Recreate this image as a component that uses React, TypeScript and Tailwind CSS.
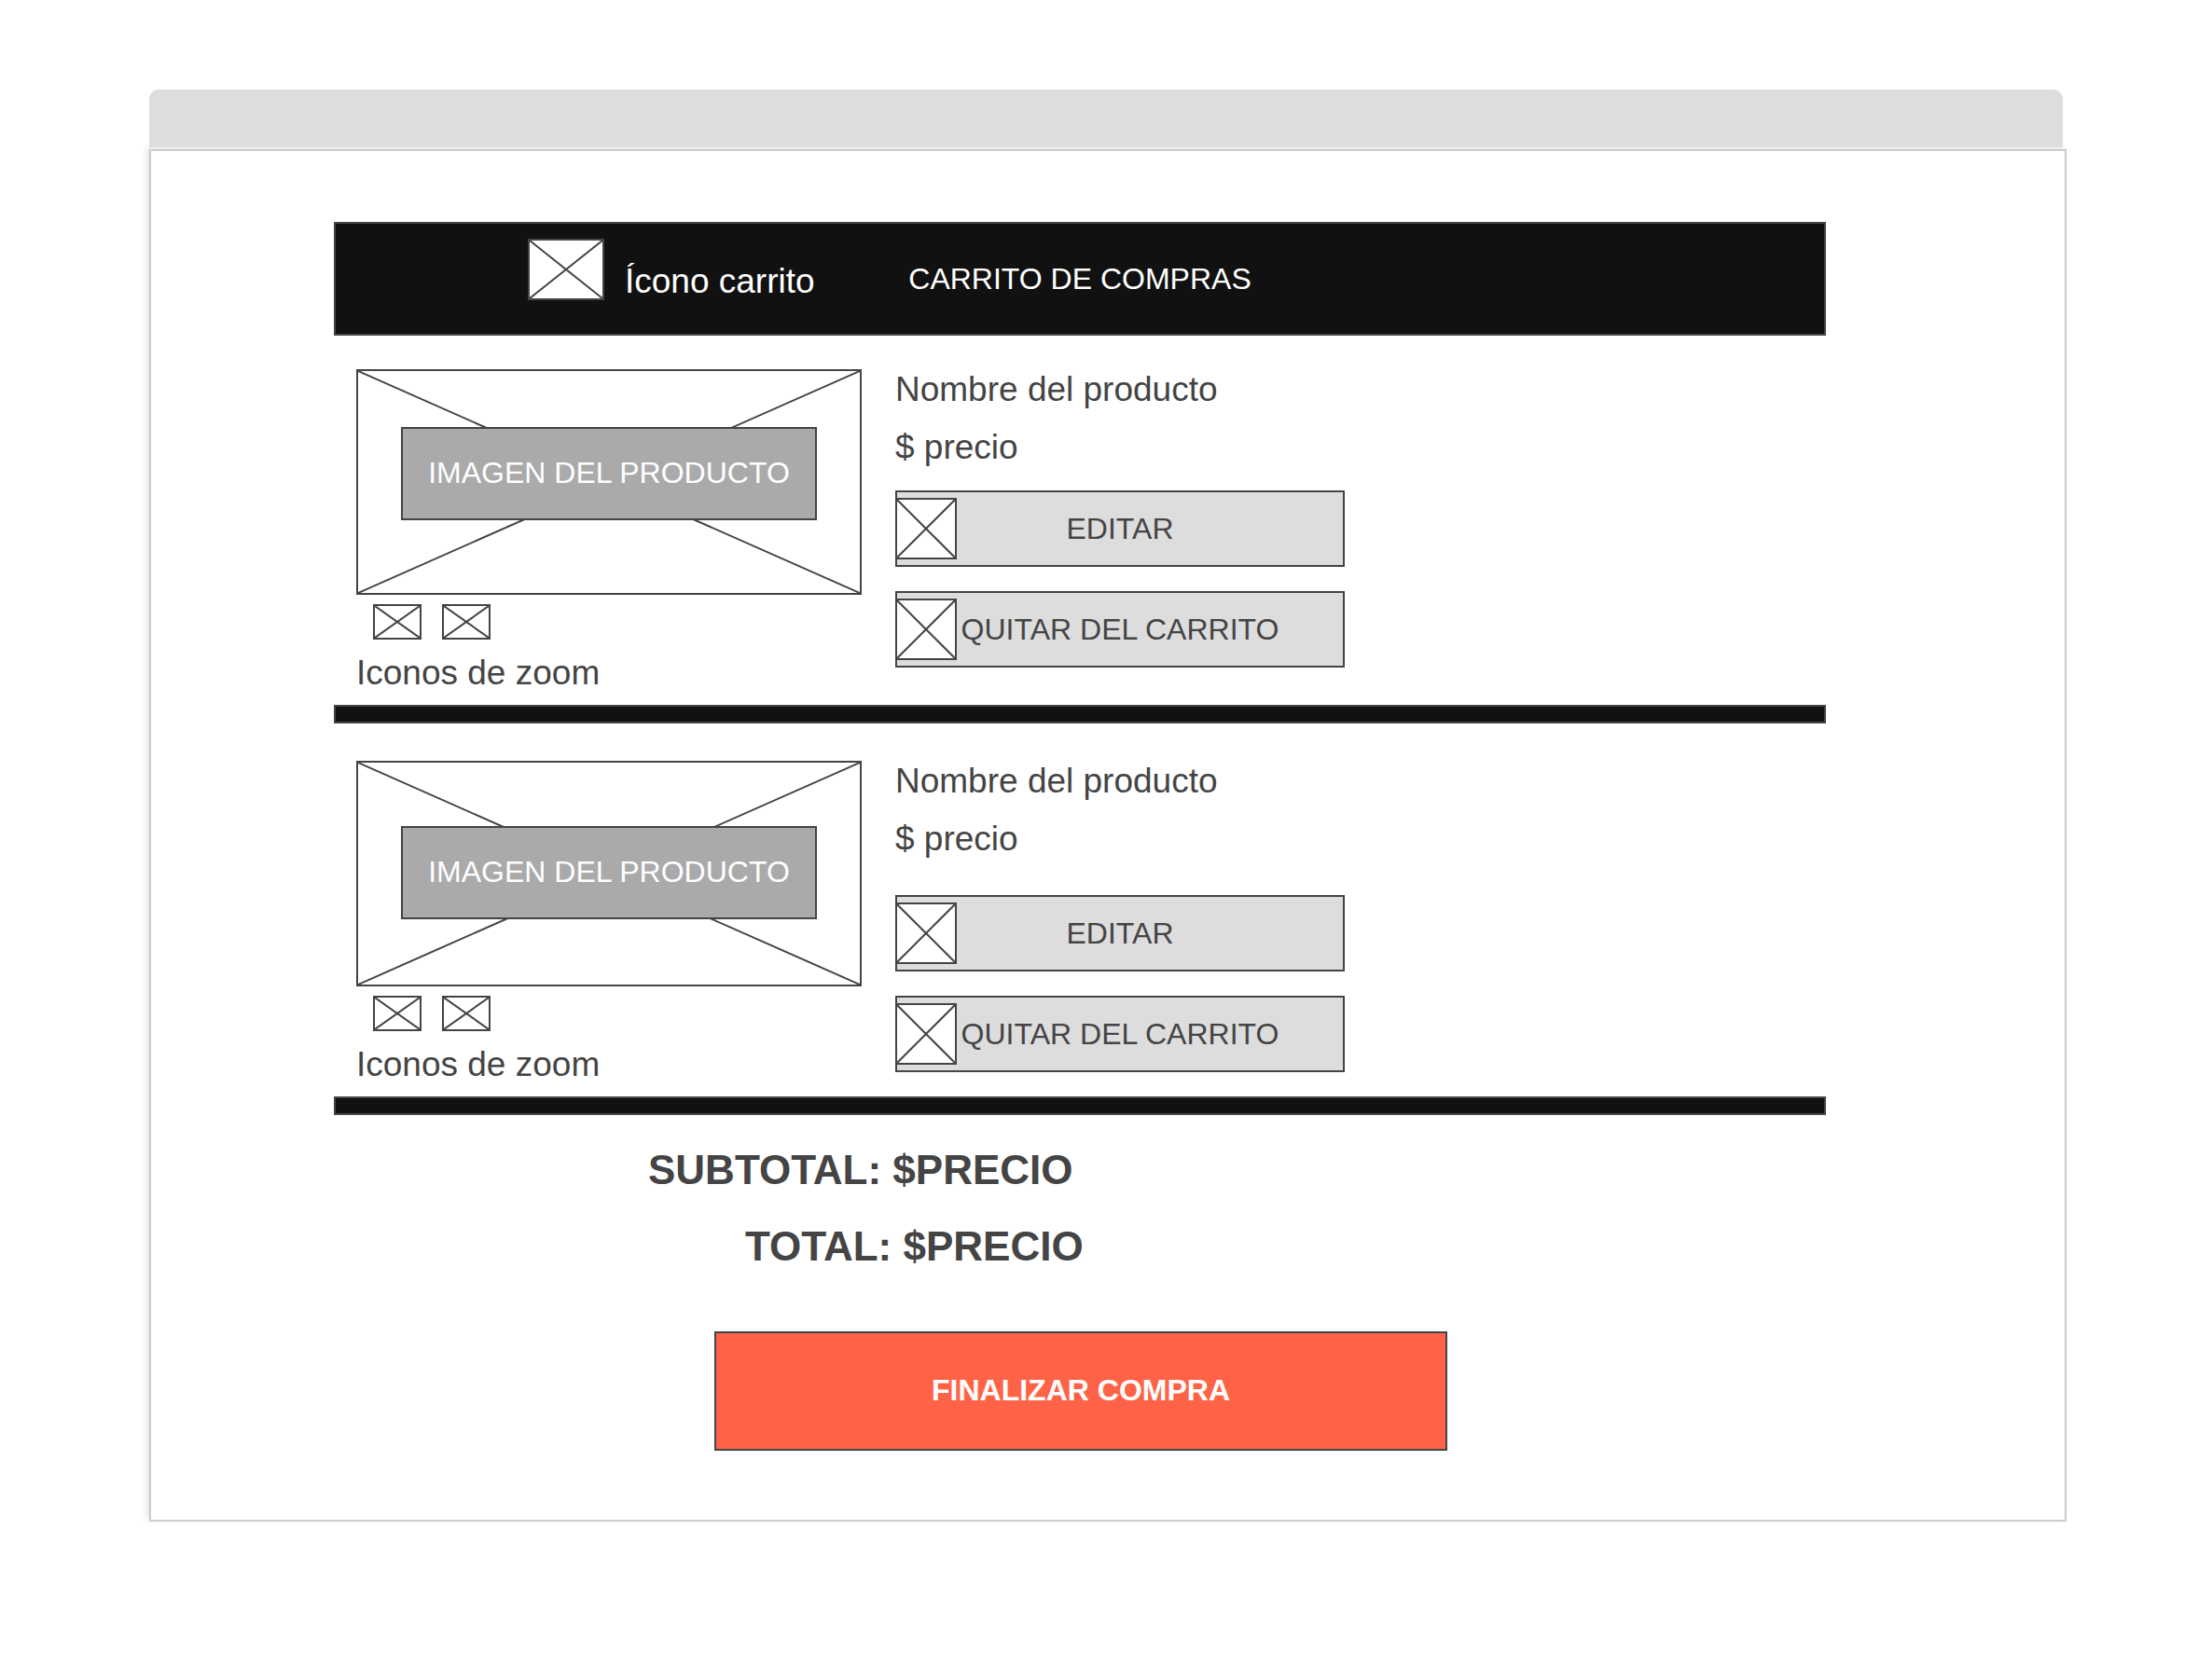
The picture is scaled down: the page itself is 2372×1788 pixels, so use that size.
import React from "react";

type Size = { className: string };

/** Crossed box standing in for a picture or an icon. */
function Placeholder({ className }: Size) {
  return (
    <span className={`block shrink-0 border-2 border-[#444] bg-white ${className}`}>
      <svg className="block h-full w-full" aria-hidden="true">
        <line x1="0" y1="0" x2="100%" y2="100%" stroke="#444" strokeWidth="2" />
        <line x1="100%" y1="0" x2="0" y2="100%" stroke="#444" strokeWidth="2" />
      </svg>
    </span>
  );
}

function Divider() {
  return <hr className="h-5 border-2 border-[#444] bg-[#111]" />;
}

function ActionButton({ label }: { label: string }) {
  return (
    <button
      type="button"
      className="grid h-[82px] w-full grid-cols-[64px_1fr_64px] items-center border-2 border-[#444] bg-[#ddd] text-[32px] leading-10 whitespace-nowrap"
    >
      <Placeholder className="-ml-0.5 h-[66px] w-[66px]" />
      <span className="text-center">{label}</span>
    </button>
  );
}

type Product = { captionTop: string; actionsTop: string; sectionTop: string };

const products: Product[] = [
  { sectionTop: "pt-9", captionTop: "top-[62px]", actionsTop: "mt-[26px]" },
  { sectionTop: "pt-10", captionTop: "top-[70px]", actionsTop: "mt-10" },
];

function CartItem({ sectionTop, captionTop, actionsTop }: Product) {
  return (
    <article className={`flex gap-9 pr-6 pb-3.5 pl-6 ${sectionTop}`}>
      <div className="w-[542px]">
        <div className="relative">
          <Placeholder className="h-[242px] w-full" />
          <div
            className={`absolute inset-x-12 flex h-[100px] items-center justify-center border-2 border-[#444] bg-[#aaa] pb-0.5 text-[32px] leading-10 whitespace-nowrap text-white ${captionTop}`}
          >
            IMAGEN DEL PRODUCTO
          </div>
        </div>
        <div className="mt-2.5 flex gap-[22px] pl-[18px]">
          <button type="button" aria-label="Acercar">
            <Placeholder className="h-[38px] w-[52px]" />
          </button>
          <button type="button" aria-label="Alejar">
            <Placeholder className="h-[38px] w-[52px]" />
          </button>
        </div>
        <p className="mt-4 text-[37px] leading-10">Iconos de zoom</p>
      </div>
      <div className="w-[482px] pt-0.5">
        <h2 className="text-[37px] leading-10">Nombre del producto</h2>
        <p className="mt-[22px] text-[37px] leading-10">$ precio</p>
        <div className={`flex flex-col gap-[26px] ${actionsTop}`}>
          <ActionButton label="EDITAR" />
          <ActionButton label="QUITAR DEL CARRITO" />
        </div>
      </div>
    </article>
  );
}

export default function App() {
  return (
    <div className="min-h-screen bg-white pt-24 pr-[156px] pb-[156px] pl-[160px] font-['Liberation_Sans',Arial,sans-serif] text-[#444]">
      <div className="relative mr-1 h-[62px] rounded-t-[10px] bg-[#ddd]" />
      <main className="mt-0.5 border-2 border-[#ccc] bg-white pt-[76px] pr-[256px] pb-[74px] pl-[196px] shadow-[-3px_-2px_6px_rgba(0,0,0,0.1)]">
        <header className="grid h-[122px] grid-cols-[1fr_auto_1fr] items-center border-2 border-[#444] bg-[#111] text-white">
          <div className="flex h-full gap-[22px] pl-[206px]">
            <Placeholder className="mt-4 h-[66px] w-[82px]" />
            <span className="self-center pt-1.5 text-[37px] leading-10 whitespace-nowrap">Ícono carrito</span>
          </div>
          <h1 className="text-[32px] leading-10 whitespace-nowrap">CARRITO DE COMPRAS</h1>
        </header>

        {products.map((product) => (
          <React.Fragment key={product.sectionTop}>
            <CartItem {...product} />
            <Divider />
          </React.Fragment>
        ))}

        <section className="flex flex-col gap-[34px] pt-[35px] text-[44px] leading-[48px] font-bold">
          <p className="pl-[337px]">SUBTOTAL: $PRECIO</p>
          <p className="pl-[441px]">TOTAL: $PRECIO</p>
        </section>

        <button
          type="button"
          className="mt-[67px] ml-[408px] block h-[128px] w-[786px] border-2 border-[#444] bg-[#ff6347] pb-0.5 text-[32px] leading-10 font-bold text-white"
        >
          FINALIZAR COMPRA
        </button>
      </main>
    </div>
  );
}
